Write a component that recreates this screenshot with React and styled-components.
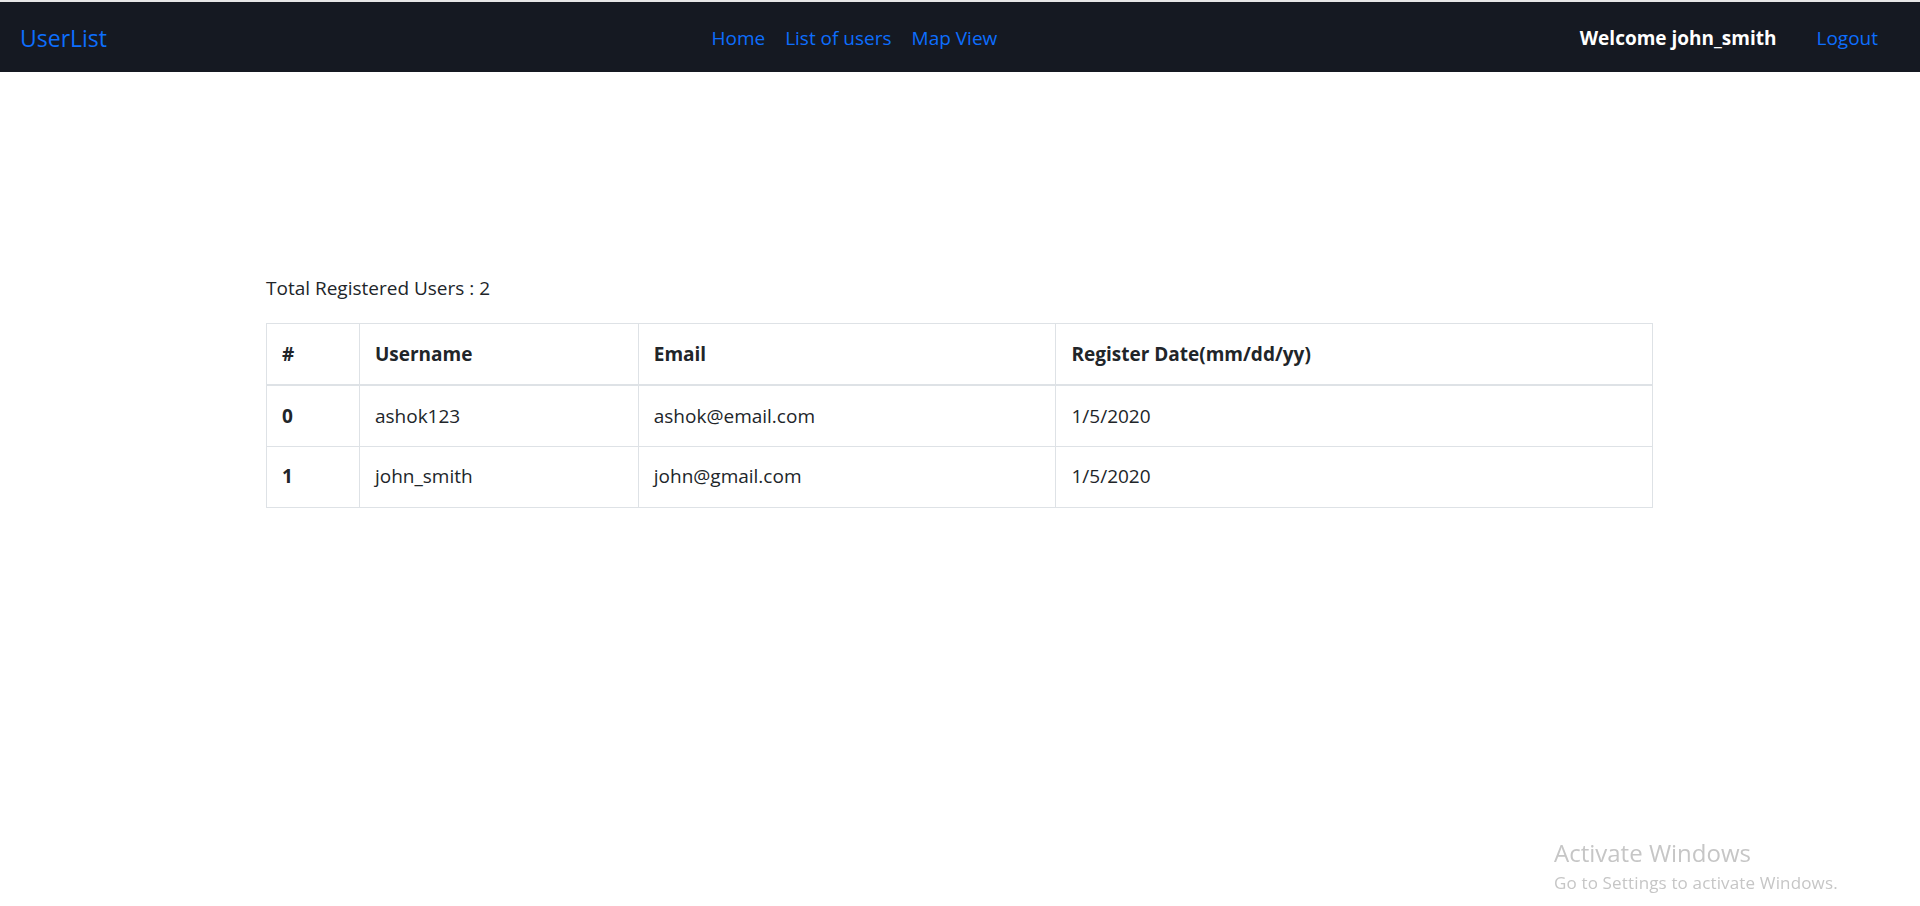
import React from "react";
import styled, { createGlobalStyle } from "styled-components";

const GlobalStyle = createGlobalStyle`
  html, body { margin: 0; padding: 0; background: #fff; }
  body {
    font-family: "Segoe UI", "Open Sans", "Noto Sans", sans-serif;
    font-size: 20px;
    line-height: 1.5;
    color: #212529;
  }
  * { box-sizing: border-box; }
`;

const TopStrip = styled.div`
  height: 2px;
  background: #e6e6e6;
`;

const NavBar = styled.nav`
  height: 70px;
  background: #151922;
  display: flex;
  align-items: center;
  padding: 2px 20px 0;
`;

const Brand = styled.a`
  font-size: 23px;
  color: #0d6efd;
  text-decoration: none;
  margin-right: 32px;
  padding: 6px 0;
`;

const NavList = styled.ul`
  list-style: none;
  display: flex;
  margin: 0 auto;
  padding: 0;
`;

const NavLink = styled.a`
  display: block;
  padding: 10px;
  font-size: 19px;
  color: #0d6efd;
  text-decoration: none;
`;

const RightGroup = styled.div`
  display: flex;
  align-items: center;
`;

const Welcome = styled.span`
  font-weight: 700;
  color: #fff;
  font-size: 19px;
  padding: 10px;
  margin-right: 20px;
`;

const LogoutLink = styled(NavLink)`
  margin-right: 12px;
`;

const Main = styled.main`
  padding: 202px 0 0 266px;
`;

const Summary = styled.p`
  margin: 0 0 20px;
  font-size: 19px;
`;

const Table = styled.table`
  width: 1387px;
  border-collapse: collapse;
  font-size: 19px;
`;

const HeadCell = styled.th`
  text-align: left;
  font-weight: 700;
  border: 1px solid #dee2e6;
  border-bottom: 2px solid #dee2e6;
  padding: 15px 15px;
  height: 62px;
  width: ${(p) => p.$w}px;
`;

const Cell = styled.td`
  border: 1px solid #dee2e6;
  padding: 15px 15px;
  height: 61px;
  font-weight: ${(p) => (p.$bold ? 700 : 400)};
`;

const Watermark = styled.div`
  position: fixed;
  left: 1554px;
  top: 837px;
  color: #c6c6c6;
  pointer-events: none;
`;

const WmTitle = styled.div`
  font-size: 24px;
  line-height: 32px;
`;

const WmSub = styled.div`
  margin-top: 3px;
  font-size: 17px;
  line-height: 22px;
  letter-spacing: 0.15px;
`;

const users = [
  { id: 0, name: "ashok123", email: "ashok@email.com", date: "1/5/2020" },
  { id: 1, name: "john_smith", email: "john@gmail.com", date: "1/5/2020" },
];

export default function App() {
  return (
    <>
      <GlobalStyle />
      <TopStrip />
      <NavBar>
        <Brand href="#">UserList</Brand>
        <NavList>
          <li><NavLink href="#">Home</NavLink></li>
          <li><NavLink href="#">List of users</NavLink></li>
          <li><NavLink href="#">Map View</NavLink></li>
        </NavList>
        <RightGroup>
          <Welcome>Welcome john_smith</Welcome>
          <LogoutLink href="#">Logout</LogoutLink>
        </RightGroup>
      </NavBar>
      <Main>
        <Summary>Total Registered Users : {users.length}</Summary>
        <Table>
          <thead>
            <tr>
              <HeadCell $w={93}>#</HeadCell>
              <HeadCell $w={279}>Username</HeadCell>
              <HeadCell $w={418}>Email</HeadCell>
              <HeadCell $w={597}>Register Date(mm/dd/yy)</HeadCell>
            </tr>
          </thead>
          <tbody>
            {users.map((u) => (
              <tr key={u.id}>
                <Cell $bold>{u.id}</Cell>
                <Cell>{u.name}</Cell>
                <Cell>{u.email}</Cell>
                <Cell>{u.date}</Cell>
              </tr>
            ))}
          </tbody>
        </Table>
      </Main>
      <Watermark>
        <WmTitle>Activate Windows</WmTitle>
        <WmSub>Go to Settings to activate Windows.</WmSub>
      </Watermark>
    </>
  );
}
